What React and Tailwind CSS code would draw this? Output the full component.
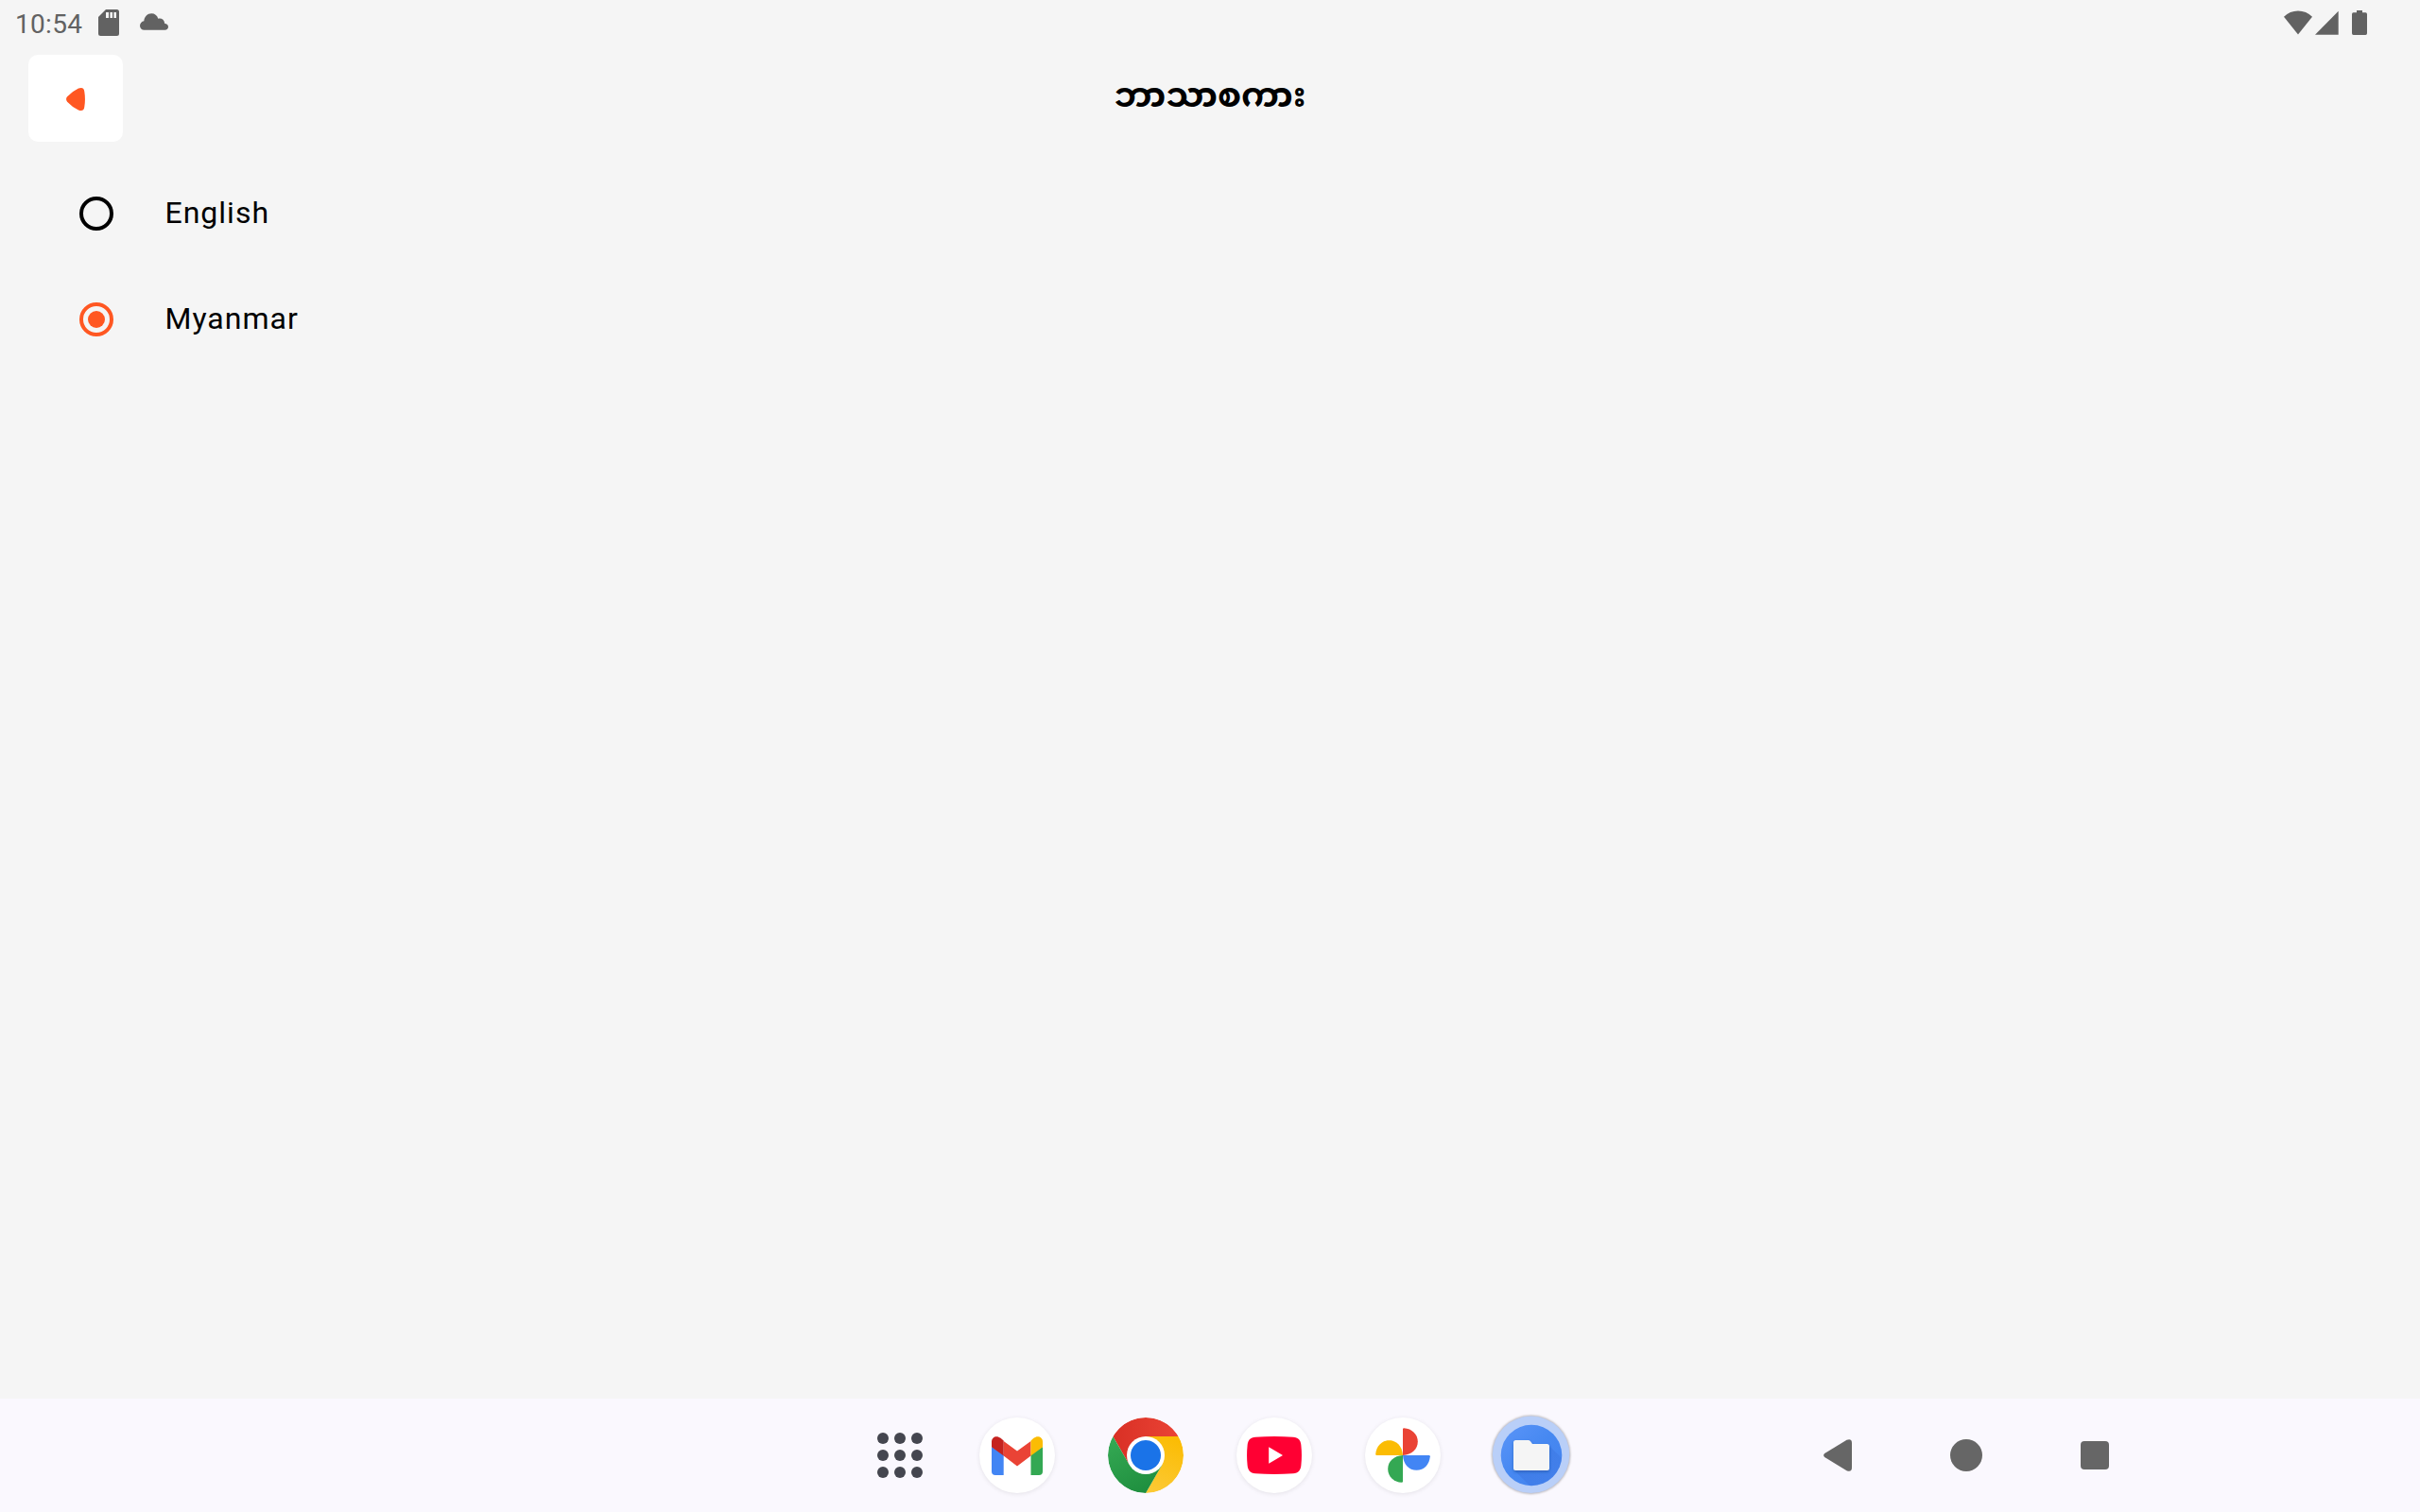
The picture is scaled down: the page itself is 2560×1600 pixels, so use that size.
import React from "react";

function StatusBar() {
  return (
    <header className="flex h-[50px] items-start justify-between text-[#626262]">
      <div className="flex">
        <span className="ml-4 mt-[7px] w-[88px] font-['Roboto',sans-serif] text-[28px] leading-[38px] tracking-[0.3px]">10:54</span>
        <svg className="mt-2.5" width="22" height="28" viewBox="0 0 22 28" fill="currentColor">
          <path fillRule="evenodd" d="M8 0H19.5Q22 0 22 2.5V25.5Q22 28 19.5 28H2.5Q0 28 0 25.5V8ZM8 3V9H11V3ZM12.4 3V9H15V3ZM16.4 3V9H19V3Z" />
        </svg>
        <svg className="ml-[22px] mt-3.5" width="30" height="18" viewBox="0 0 30 18" fill="currentColor">
          <path d="M4.5 17.8C2 17.8 0 15.800 0 13.200C0 10.600 1.900 8.500 4.300 8.200C4.700 3.600 8 .3 12.300 .3C15.600 .3 18.200 2.300 19.300 5.700C23 5 25.600 6.800 26.300 11C28.500 11 30 12.400 30 14.300C30 16.300 28.500 17.800 26.500 17.800Z" />
        </svg>
      </div>
      <div className="mt-[11px] flex pr-14">
        <svg width="30" height="26" viewBox="0 0 30 26" fill="currentColor">
          <path d="M15 25.500L0 6.800Q6.300 .6 15 .6T30 6.800Z" />
        </svg>
        <svg className="ml-[3px]" width="25" height="26" viewBox="0 0 25 26" fill="currentColor">
          <path d="M24.700 .8V25.800H0Z" />
        </svg>
        <svg className="ml-3.5" width="16" height="26" viewBox="0 0 16 26" fill="currentColor">
          <path d="M5 0H11V2.300H14.400Q16 2.300 16 4V24.300Q16 26 14.400 26H1.600Q0 26 0 24.300V4Q0 2.300 1.600 2.300H5Z" />
        </svg>
      </div>
    </header>
  );
}

function TitleBar() {
  return (
    <div className="mx-[30px] mt-2 grid h-[92px] grid-cols-[100px_1fr_100px]">
      <button className="flex items-center justify-center rounded-[10px] bg-white pt-0.5">
        <svg width="20" height="24" viewBox="0 0 20 24" fill="#ff5722">
          <path d="M1.100 9.300Q6 4 13 .6C17 -.9 19 .6 19.300 4Q20.600 12 19.300 20C19 23.400 17 24.900 13 23.400Q6 20 1.100 14.700Q-1 12 1.100 9.300Z" />
        </svg>
      </button>
      <h1 className="pt-[21px] text-center font-['Roboto','Noto_Sans_Myanmar','Noto_Sans',sans-serif] text-[36px] font-bold leading-[44px] text-black">ဘာသာစကား</h1>
    </div>
  );
}

function LanguageOption({ label, selected }) {
  return (
    <label className="flex h-28 items-center">
      <svg className="ml-[84px]" width="36" height="36" viewBox="0 0 36 36">
        <circle cx="18" cy="18" r="16" fill="none" stroke={selected ? "#ff5722" : "#000"} strokeWidth="4" />
        {selected && <circle cx="18" cy="18" r="9" fill="#ff5722" />}
      </svg>
      <span className="-mt-0.5 ml-[54.5px] font-['Roboto',sans-serif] text-[32px] leading-10 tracking-[1px] text-black">{label}</span>
    </label>
  );
}

const disc = "flex size-20 items-center justify-center rounded-full bg-white shadow-[0_1px_5px_rgba(0,0,0,0.09)]";

function Gmail() {
  return (
    <div className={disc}>
      <svg width="54" height="41" viewBox="0 0 54 41">
        <path fill="#4285f4" d="M0 11L12.700 19V41H4Q0 41 0 37Z" />
        <path fill="#34a853" d="M54 11L41.500 19V41H50Q54 41 54 37Z" />
        <path fill="#ea4335" d="M12.700 5L27 15.500L41.500 5V20.500L27 31.500L12.700 20.500Z" />
        <path fill="#c5221f" d="M0 5.500C0 .5 5.500 -1.500 9.500 1.800L12.700 4.500V20.500L0 11.300Z" />
        <path fill="#fbbc04" d="M54 5.500C54 .5 48.500 -1.500 44.500 1.800L41.500 4.500V20.500L54 11.300Z" />
      </svg>
    </div>
  );
}

function Chrome() {
  return (
    <svg className="rounded-full" width="80" height="80" viewBox="0 0 80 80">
      <defs>
        <linearGradient id="chromeRed" x1="0" x2="1"><stop stopColor="#d93025" /><stop offset="1" stopColor="#ea4335" /></linearGradient>
        <linearGradient id="chromeGreen" x1=".7" y1="1" x2=".2" y2="0"><stop stopColor="#1e8e3e" /><stop offset="1" stopColor="#34a853" /></linearGradient>
        <linearGradient id="chromeYellow" x1=".3" y1="1" x2=".6" y2="0"><stop stopColor="#fcc934" /><stop offset="1" stopColor="#fbbc04" /></linearGradient>
      </defs>
      <path fill="url(#chromeRed)" d="M5.360 20A40 40 0 0 1 74.640 20H40L22.680 50Z" />
      <path fill="url(#chromeYellow)" d="M74.640 20A40 40 0 0 1 40 80L57.320 50L40 20Z" />
      <path fill="url(#chromeGreen)" d="M40 80A40 40 0 0 1 5.360 20L22.680 50H57.320Z" />
      <circle cx="40" cy="40" r="20" fill="#fff" />
      <circle cx="40" cy="40" r="16" fill="#1a73e8" />
    </svg>
  );
}

function YouTube() {
  return (
    <div className={disc}>
      <svg width="58" height="40" viewBox="0 0 58 40">
        <path fill="#ff0033" d="M9 .8Q29 -.8 49 .8C54.500 1.200 56.900 4 57.400 9.500Q58.500 20 57.400 30.500C56.900 36 54.500 38.800 49 39.200Q29 40.800 9 39.200C3.500 38.800 1.100 36 .6 30.500Q-.5 20 .6 9.500C1.100 4 3.500 1.200 9 .8Z" />
        <path fill="#fff" d="M23.200 11.200L38 20L23.200 28.800Z" />
      </svg>
    </div>
  );
}

function Photos() {
  return (
    <div className={disc}>
      <svg width="58" height="58" viewBox="0 0 58 58">
        <path fill="#ea4335" d="M29 29V1.300Q29 .2 30.200 .2C38.500 .8 44.800 6.500 44.800 14.600S38.500 28.400 29 29Z" />
        <path fill="#4285f4" d="M29 29H56.700Q57.800 29 57.800 30.200C57.200 38.500 51.500 44.800 43.400 44.800S29.600 38.500 29 29Z" />
        <path fill="#34a853" d="M29 29V56.700Q29 57.800 27.800 57.800C19.500 57.200 13.200 51.500 13.200 43.400S19.500 29.600 29 29Z" />
        <path fill="#fbbc04" d="M29 29H1.300Q.2 29 .2 27.800C.8 19.500 6.500 13.200 14.600 13.200S28.400 19.500 29 29Z" />
      </svg>
    </div>
  );
}

function Files() {
  return (
    <svg className="-m-1" width="88" height="88" viewBox="0 0 88 88">
      <defs>
        <linearGradient id="filesBlue" x1="0" y1="0" x2="1" y2="1"><stop stopColor="#5b95f8" /><stop offset=".5" stopColor="#4688f1" /><stop offset="1" stopColor="#4483ee" /></linearGradient>
        <linearGradient id="filesShade" x1="0" y1="0" x2="1" y2="1"><stop stopColor="#2a56c6" stopOpacity=".3" /><stop offset="1" stopColor="#2a56c6" stopOpacity="0" /></linearGradient>
        <clipPath id="filesClip"><circle cx="44" cy="44" r="32.300" /></clipPath>
        <filter id="rimBlur" x="-10%" y="-10%" width="120%" height="120%"><feGaussianBlur stdDeviation=".8" /></filter>
        <filter id="folderShadow" x="-20%" y="-20%" width="140%" height="150%"><feDropShadow dx="0" dy="1.500" stdDeviation="1.400" floodColor="#1b3f85" floodOpacity=".45" /></filter>
      </defs>
      <circle cx="43.600" cy="43.400" r="41.600" fill="#b5b3b8" filter="url(#rimBlur)" />
      <circle cx="43.600" cy="43.300" r="40.700" fill="#b9cff8" />
      <circle cx="44" cy="44" r="32.300" fill="url(#filesBlue)" />
      <g clipPath="url(#filesClip)">
        <path fill="url(#filesShade)" d="M62 33L88 59V88H54L26 60H62Z" />
      </g>
      <path filter="url(#folderShadow)" fill="#f5f5f5" d="M27.500 28H40.500Q42 28 43 29.200L45 32H60.500Q63 32 63 34.500V57.500Q63 60 60.500 60H27.500Q25 60 25 57.500V30.500Q25 28 27.500 28Z" />
    </svg>
  );
}

function AppGrid() {
  return (
    <div className="grid grid-cols-3 gap-1.5">
      {Array.from({ length: 9 }, (_, i) => (
        <span key={i} className="size-3 rounded-full bg-[#44464f]" />
      ))}
    </div>
  );
}

function Taskbar() {
  return (
    <nav className="flex h-[120px] items-center bg-[#faf8fe]">
      <div className="ml-[928px] mr-[60px]">
        <AppGrid />
      </div>
      <div className="flex items-center gap-14">
        <Gmail />
        <Chrome />
        <YouTube />
        <Photos />
        <Files />
      </div>
      <div className="ml-auto mr-[276px] grid grid-cols-[136px_136px_136px] place-items-center">
        <svg width="30" height="34" viewBox="0 0 30 34" fill="#666">
          <path d="M1.200 15.100L24.500 .8Q30 -1.200 30 4V30Q30 35.200 24.500 33.200L1.200 18.900Q-1 17 1.200 15.100Z" />
        </svg>
        <span className="size-[34px] rounded-full bg-[#666]" />
        <span className="size-[30px] rounded bg-[#666]" />
      </div>
    </nav>
  );
}

export default function App() {
  return (
    <div className="flex h-[1600px] w-[2560px] flex-col overflow-hidden bg-[#f5f5f5]">
      <StatusBar />
      <TitleBar />
      <main className="flex-1 pt-5">
        <LanguageOption label="English" />
        <LanguageOption label="Myanmar" selected />
      </main>
      <Taskbar />
    </div>
  );
}
